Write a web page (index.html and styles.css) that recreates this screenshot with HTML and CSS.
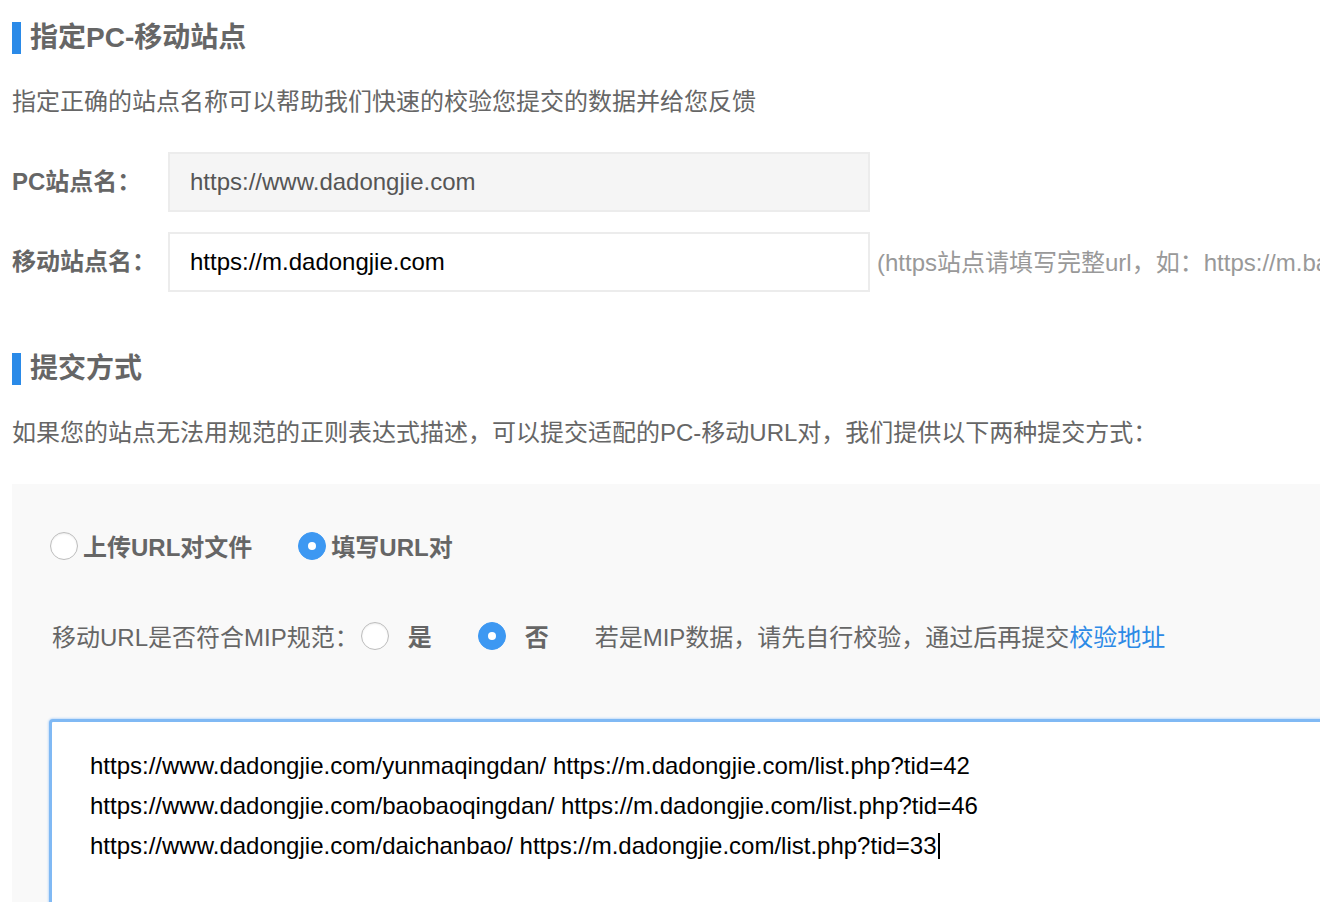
FILE: index.html
```
<!DOCTYPE html>
<html lang="zh-CN">
<head>
<meta charset="utf-8">
<title>指定PC-移动站点</title>
<link rel="stylesheet" href="styles.css">
</head>
<body>
<div class="page">
  <h2 class="section-title"><span class="bar"></span>指定PC-移动站点</h2>
  <p class="desc">指定正确的站点名称可以帮助我们快速的校验您提交的数据并给您反馈</p>

  <div class="form-row first">
    <label class="form-label">PC站点名：</label>
    <div class="input readonly">https://www.dadongjie.com</div>
  </div>
  <div class="form-row">
    <label class="form-label">移动站点名：</label>
    <div class="input">https://m.dadongjie.com</div>
    <span class="hint">(https站点请填写完整url，如：https://m.baidu.com)</span>
  </div>

  <h2 class="section-title second"><span class="bar"></span>提交方式</h2>
  <p class="desc">如果您的站点无法用规范的正则表达式描述，可以提交适配的PC-移动URL对，我们提供以下两种提交方式：</p>

  <div class="panel">
    <div class="mode-row">
      <span class="radio-item"><span class="radio"></span><span class="radio-text">上传URL对文件</span></span>
      <span class="radio-item"><span class="radio checked"></span><span class="radio-text">填写URL对</span></span>
    </div>
    <div class="mip-row">
      <span class="mip-label">移动URL是否符合MIP规范：</span>
      <span class="radio-item wide"><span class="radio"></span><span class="radio-text">是</span></span>
      <span class="radio-item wide"><span class="radio checked"></span><span class="radio-text">否</span></span>
      <span class="mip-hint">若是MIP数据，请先自行校验，通过后再提交<a class="link" href="#">校验地址</a></span>
    </div>
    <div class="textarea">
      <div class="line">https://www.dadongjie.com/yunmaqingdan/ https://m.dadongjie.com/list.php?tid=42</div>
      <div class="line">https://www.dadongjie.com/baobaoqingdan/ https://m.dadongjie.com/list.php?tid=46</div>
      <div class="line">https://www.dadongjie.com/daichanbao/ https://m.dadongjie.com/list.php?tid=33<span class="caret"></span></div>
    </div>
  </div>
</div>
</body>
</html>
```
FILE: styles.css
```
html, body {
  margin: 0;
  padding: 0;
  background: #fff;
  overflow: hidden;
}
body {
  width: 1320px;
  height: 902px;
  font-family: "Liberation Sans", "Noto Sans CJK SC", sans-serif;
  color: #666;
  font-size: 24px;
}
.page {
  padding-left: 12px;
  padding-top: 18px;
}
.section-title {
  display: flex;
  align-items: center;
  margin: 0;
  height: 40px;
  line-height: 40px;
  font-size: 28px;
  font-weight: bold;
  color: #666;
  white-space: nowrap;
}
.section-title.second {
  margin-top: 57px;
}
.bar {
  display: block;
  width: 9px;
  height: 32px;
  background: #2a8ae8;
  margin-right: 9px;
}
.desc {
  margin: 24px 0 0;
  line-height: 40px;
  height: 40px;
  white-space: nowrap;
  color: #666;
}
.form-row {
  display: flex;
  align-items: center;
  margin-top: 20px;
  white-space: nowrap;
}
.form-row.first {
  margin-top: 30px;
}
.form-label {
  width: 156px;
  flex: none;
  font-weight: bold;
  color: #666;
  padding-bottom: 5px;
}
.input {
  flex: none;
  box-sizing: border-box;
  width: 702px;
  height: 60px;
  line-height: 56px;
  border: 2px solid #ececec;
  padding-left: 20px;
  background: #fff;
  color: #000;
}
.input.readonly {
  background: #f5f5f5;
  color: #555;
}
.hint {
  margin-left: 7px;
  color: #999;
  padding-bottom: 3px;
}
.panel {
  margin-top: 31px;
  background: #f9f9f9;
  padding: 41px 0 0 38px;
  width: 1400px;
  height: 500px;
  box-sizing: border-box;
}
.mode-row, .mip-row {
  display: flex;
  align-items: center;
  height: 40px;
  white-space: nowrap;
}
.mip-row {
  margin-top: 50px;
  padding-left: 2px;
}
.radio-item {
  display: flex;
  align-items: center;
  margin-right: 46px;
}
.radio {
  box-sizing: border-box;
  width: 28px;
  height: 28px;
  border-radius: 50%;
  background: #fff;
  border: 1px solid #bdbdbd;
  box-shadow: inset 0 1px 2px rgba(0,0,0,0.08);
  flex: none;
  position: relative;
  margin-top: 2px;
}
.radio.checked {
  background: #3d98f2;
  border-color: #3d98f2;
  box-shadow: none;
}
.radio.checked::after {
  content: "";
  position: absolute;
  left: 50%;
  top: 50%;
  width: 8px;
  height: 8px;
  margin: -4px 0 0 -4px;
  border-radius: 50%;
  background: #fff;
}
.radio-text {
  margin-left: 5px;
  font-weight: bold;
  color: #666;
}
.radio-item.wide .radio-text {
  margin-left: 19px;
}
.mip-label {
  margin-right: 2px;
  color: #666;
}
.mip-hint {
  color: #666;
}
.link {
  color: #2d8ae6;
  text-decoration: none;
}
.textarea {
  margin-top: 64px;
  margin-left: -1px;
  box-sizing: border-box;
  width: 1400px;
  height: 300px;
  background: #fff;
  border: 3px solid #80b9f4;
  border-radius: 4px;
  box-shadow: 0 0 2px 1px #c4ddfa;
  padding: 24px 0 0 38px;
  color: #000;
}
.line {
  line-height: 40px;
  height: 40px;
  white-space: nowrap;
}
.caret {
  display: inline-block;
  width: 2px;
  height: 26px;
  background: #000;
  vertical-align: -5px;
  margin-left: 1px;
}
```
